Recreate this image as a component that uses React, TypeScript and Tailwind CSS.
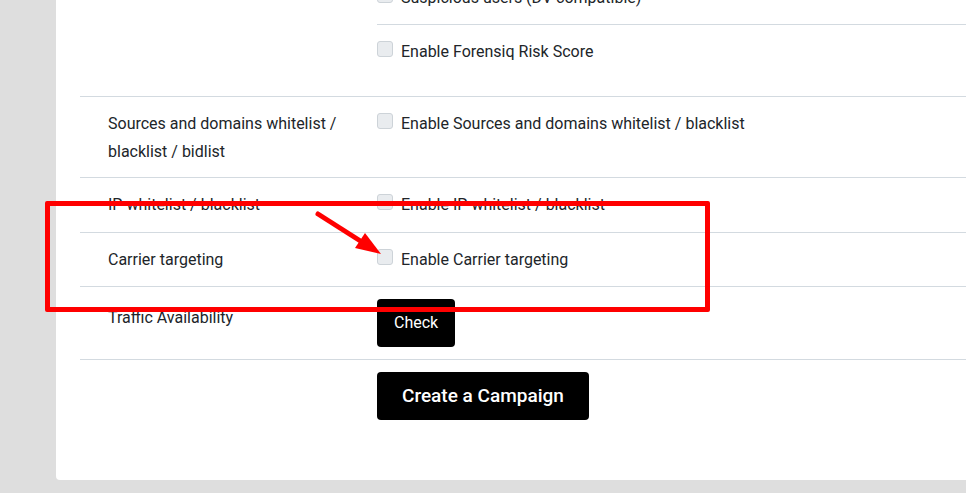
import React from "react";

function Checkbox() {
  return (
    <span className="mt-[3px] block h-[16px] w-[16px] shrink-0 rounded-[3px] border border-[#cdd3d8] bg-[#e9ecef]" />
  );
}

function CheckItem({ label, className }: { label: string; className?: string }) {
  return (
    <label className={"flex gap-2 " + (className || "")}>
      <Checkbox />
      <span>{label}</span>
    </label>
  );
}

function Row({
  label,
  children,
  last,
  labelClass,
}: {
  label?: React.ReactNode;
  children: React.ReactNode;
  last?: boolean;
  labelClass?: string;
}) {
  return (
    <div className={"flex " + (last ? "" : "border-b border-[#d3dae0]")}>
      <div className={"w-[297px] shrink-0 pl-[28px] pr-4 " + (labelClass || "")}>{label}</div>
      <div className="flex-1">{children}</div>
    </div>
  );
}

export default function App() {
  return (
    <div className="relative h-[493px] w-[966px] overflow-hidden bg-[#dedede] font-['Roboto',sans-serif] text-[16px] leading-[28px] text-[#212529]">
      <div className="ml-[56px] -mt-[30px] w-[1000px] rounded-[4px] bg-white pl-[24px] pb-[60px]">
        <Row>
          <CheckItem label="Suspicious users (DV compatible)" className="border-b border-[#d3dae0] pt-[14px] pb-[12px]" />
          <CheckItem label="Enable Forensiq Risk Score" className="pt-[13px] pb-[30px]" />
        </Row>

        <Row label={<>Sources and domains whitelist /<br />blacklist / bidlist</>} labelClass="pt-[13px] pb-[11px]">
          <CheckItem label="Enable Sources and domains whitelist / blacklist" className="pt-[13px]" />
        </Row>

        <Row label="IP whitelist / blacklist" labelClass="pt-[13px] pb-[13px]">
          <CheckItem label="Enable IP whitelist / blacklist" className="pt-[13px]" />
        </Row>

        <Row label="Carrier targeting" labelClass="pt-[13px] pb-[12px]">
          <CheckItem label="Enable Carrier targeting" className="pt-[13px]" />
        </Row>

        <Row label="Traffic Availability" labelClass="pt-[17px]">
          <div className="py-[12px]">
            <button className="h-[48px] rounded-[4px] bg-black px-[17px] text-[16px] text-white">
              Check
            </button>
          </div>
        </Row>

        <Row last>
          <div className="pt-[12px]">
            <button className="h-[48px] rounded-[4px] bg-black px-[25px] text-[19px] font-medium text-white">
              Create a Campaign
            </button>
          </div>
        </Row>
      </div>

      {/* annotation overlay */}
      <div className="pointer-events-none absolute left-[45px] top-[201px] h-[111px] w-[665px] rounded-[2px] border-[5px] border-[#ff0000]" />
      <svg className="pointer-events-none absolute left-0 top-0" width="966" height="493">
        <line x1="318" y1="214" x2="362" y2="242" stroke="#ff0000" strokeWidth="5" strokeLinecap="round" />
        <polygon points="381,254 355,248 365,233" fill="#ff0000" />
      </svg>
    </div>
  );
}
